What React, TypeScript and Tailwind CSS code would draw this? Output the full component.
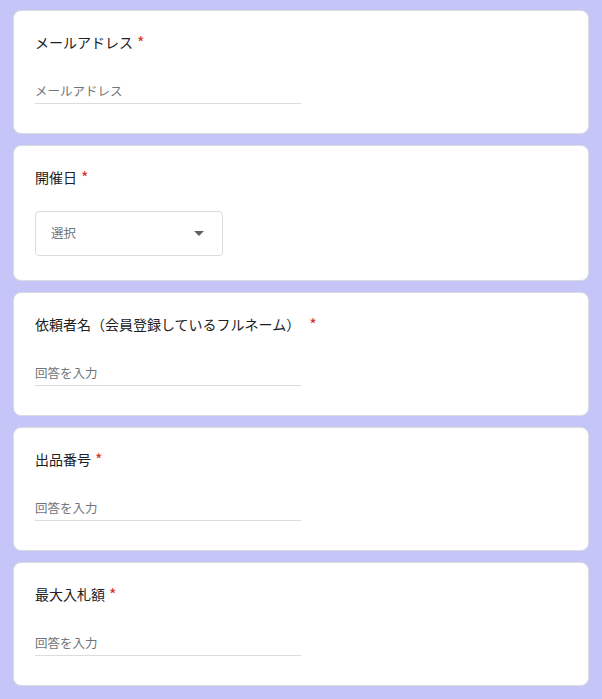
import React from "react";

// Question card for a short text answer
interface TextQuestion {
  id: string;
  label: string;
  placeholder: string;
  spaced?: boolean;
}

const font = { fontFamily: '"Noto Sans CJK JP", "Noto Sans", sans-serif' };

const Required: React.FC<{ spaced?: boolean }> = ({ spaced }) => (
  <span className={`text-[#d93025] text-[16px] leading-[24px] ${spaced ? "ml-[9px]" : "ml-[4px]"}`}>*</span>
);

const Card: React.FC<{ children: React.ReactNode }> = ({ children }) => (
  <div className="bg-white border border-[#dadce0] rounded-[8px] px-[21px] pt-[19px]">
    {children}
  </div>
);

const TextCard: React.FC<{ q: TextQuestion }> = ({ q }) => (
  <Card>
    <div className="flex items-start h-[24px] leading-[24px] text-[14px] text-[#202124]">
      <span>{q.label}</span>
      <Required spaced={q.spaced} />
    </div>
    <div className="mt-[27px] w-[266px] border-b border-[#dadce0] pb-[2px]">
      <span className="block leading-[20px] text-[12.5px] text-[#70757a]">{q.placeholder}</span>
    </div>
    <div className="h-[29px]" />
  </Card>
);

export default function App() {
  const questions: TextQuestion[] = [
    {
      id: "name",
      label: "依頼者名（会員登録しているフルネーム）",
      placeholder: "回答を入力",
      spaced: true,
    },
    { id: "lot", label: "出品番号", placeholder: "回答を入力" },
    { id: "bid", label: "最大入札額", placeholder: "回答を入力" },
  ];

  return (
    <div className="min-h-screen bg-[#c5c5f8] px-[13px] pt-[10px] pb-[13px]" style={font}>
      <div className="flex flex-col gap-[11px]">
        {/* Email */}
        <TextCard q={{ id: "email", label: "メールアドレス", placeholder: "メールアドレス" }} />

        {/* Date select */}
        <Card>
          <div className="flex items-start h-[24px] leading-[24px] text-[14px] text-[#202124]">
            <span>開催日</span>
            <Required />
          </div>
          <div className="mt-[22px] w-[188px] h-[45px] border border-[#dadce0] rounded-[4px] flex items-center justify-between pl-[15px] pr-[18px]">
            <span className="text-[12.5px] text-[#70757a]">選択</span>
            <svg width="10" height="5" viewBox="0 0 10 5">
              <path d="M0 0l5 5 5-5z" fill="#5f6368" />
            </svg>
          </div>
          <div className="h-[24px]" />
        </Card>

        {questions.map((q) => (
          <TextCard key={q.id} q={q} />
        ))}
      </div>
    </div>
  );
}
